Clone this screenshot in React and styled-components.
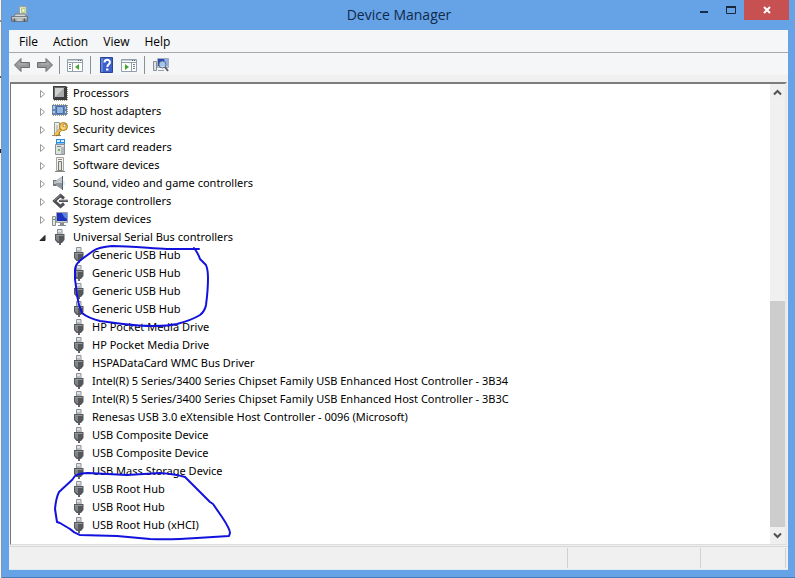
import React from 'react';
import styled, { createGlobalStyle } from 'styled-components';

const GlobalStyle = createGlobalStyle`
  * {
    box-sizing: border-box;
  }
  body {
    margin: 0;
    background: #fff;
    font-family: 'Open Sans', 'Noto Sans', sans-serif;
    font-size: 12px;
    color: #000;
  }
`;

const Desktop = styled.div`
  display: flex;
  min-height: 100vh;
`;

const Behind = styled.div`
  width: 2px;
  background:
    linear-gradient(#889, #889) 0 20px / 1px 2px no-repeat,
    linear-gradient(#556, #556) 0 76px / 1px 2px no-repeat,
    linear-gradient(#224, #224) 0 149px / 1px 4px no-repeat,
    #f4f6f8;
  border-right: 1px solid #8496ac;
`;

const Window = styled.div`
  flex: 1;
  min-width: 0;
  display: flex;
  flex-direction: column;
  padding: 0 7px 7px;
  background: #66a3e6;
  border-bottom: 1px solid #4a7db8;
`;

const TitleBar = styled.header`
  display: grid;
  grid-template-columns: 110px 1fr 110px;
  height: 30px;
  margin-right: -1px;
`;

const AppIcon = styled.div`
  padding: 6px 0 0 2px;
`;

const Title = styled.h1`
  margin: 0;
  padding-top: 4px;
  text-align: center;
  font-size: 14px;
  line-height: 22px;
  font-weight: 400;
  color: #10294a;
`;

const WindowButtons = styled.div`
  display: flex;
  justify-content: flex-end;
  align-items: flex-start;
`;

const WindowButton = styled.button`
  display: flex;
  align-items: center;
  justify-content: center;
  width: ${({ $close }) => ($close ? 45 : 27)}px;
  height: 20px;
  padding: 0;
  border: 0;
  flex: none;
  background: ${({ $close }) => ($close ? '#c75050' : 'transparent')};
`;

const Client = styled.div`
  flex: 1;
  display: flex;
  flex-direction: column;
  background: #f0f0f0;
  border-bottom: 1px solid #dfe9f3;
`;

const MenuBar = styled.nav`
  display: flex;
  gap: 1px;
  height: 23px;
  padding-left: 3px;
  background: #f5f6f7;
  border-bottom: 1px solid #a9a9a9;
`;

const MenuItem = styled.button`
  height: 22px;
  padding: 0 7px;
  border: 0;
  background: none;
  font: inherit;
  color: inherit;
`;

const ToolBar = styled.div`
  display: flex;
  align-items: center;
  height: 22px;
  padding: 2px 0 0 1px;
  background: #f5f6f7;
`;

const ToolButton = styled.button`
  display: flex;
  align-items: center;
  justify-content: center;
  width: 23px;
  height: 20px;
  padding: 0;
  border: 0;
  background: none;
`;

const ToolDivider = styled.div`
  width: 1px;
  height: 18px;
  margin: 0 4px 0 3px;
  background: #8c8f92;
`;

const Panel = styled.div`
  flex: 1;
  display: flex;
  margin: 7px 1px 0;
  background: #fff;
  border: 1px solid #dcdcdc;
  border-top: 2px solid #7c7c7c;
  border-left-color: #777;
  border-right: 2px solid #e9e9e9;
`;

const TreeArea = styled.main`
  position: relative;
  flex: 1;
  min-width: 0;
  overflow: hidden;
  font-family: 'Noto Sans', sans-serif;
  font-size: 11px;
`;

const List = styled.ul`
  margin: 0;
  padding: 0;
  list-style: none;
`;

const Row = styled.li`
  display: flex;
  align-items: center;
  height: 18px;
  padding-left: ${({ $child }) => ($child ? 60 : 27)}px;
  line-height: 18px;
  white-space: nowrap;
`;

const Toggle = styled.button`
  display: flex;
  width: 10px;
  height: 10px;
  margin-right: 4px;
  padding: 0;
  border: 0;
  background: none;
`;

const Label = styled.span`
  padding-left: 5px;
`;

const Ink = styled.svg`
  position: absolute;
  top: 0;
  left: 0;
  pointer-events: none;
`;

const ScrollBar = styled.div`
  display: flex;
  flex-direction: column;
  width: 15px;
  background: #f0f0f0;
`;

const ScrollButton = styled.button`
  display: flex;
  align-items: center;
  justify-content: center;
  height: 17px;
  padding: 0;
  border: 0;
  background: #efefef;
`;

const ScrollTrack = styled.div`
  flex: 1;
  display: flex;
  flex-direction: column;
  justify-content: flex-end;
`;

const ScrollThumb = styled.div`
  height: 53%;
  background: #cdcdcd;
`;

const StatusBar = styled.footer`
  display: grid;
  grid-template-columns: 1fr 133px 85px;
  height: 23px;
  margin-top: 1px;
  padding: 1px 2px 1px 0;
  border-top: 1px solid #d7d7d7;
`;

const StatusCell = styled.div`
  border-right: 1px solid #d0d0d0;
`;

const Icon = ({ children, size = 16 }) => (
  <svg width={size} height={size} viewBox="0 0 16 16" aria-hidden="true">
    {children}
  </svg>
);

const UsbIcon = () => (
  <Icon>
    <path d="M5.500.500h4.500v6H5.500z" fill="#dfe2e6" stroke="#8e9196" />
    <path d="M6 3h4v2H6z" fill="#b9bdc2" />
    <path d="M3 5h9.500v6L10 14H5.500L3 11z" fill="#55575b" />
    <path d="M4 6h3v7L4 10.500z" fill="#818488" />
    <path d="M4 6h7.500v1H4z" fill="#94979b" />
    <path d="M7 14h2v2H7z" fill="#606367" />
  </Icon>
);

const CpuIcon = () => (
  <Icon>
    <path d="M15.500 2v14M2 15.500h14" stroke="#a89a7a" strokeDasharray="1 1" />
    <path d="M1 1h13l1 1v13H2l-1-1z" fill="#3c3c3e" />
    <path d="M2 2h11v1H3v10H2z" fill="#68696b" />
    <path d="M3 3h9v9H3z" fill="#a9aaab" />
    <path d="M3 3h9L3 12z" fill="#cfd0d0" />
  </Icon>
);

const SdIcon = () => (
  <Icon>
    <path d="M1 1.500h14M1 12.500h14" stroke="#a79c70" strokeDasharray="1 1" />
    <path d="M15.500 2v10" stroke="#a79c70" strokeDasharray="1 1" />
    <path d="M0 2h15v10H0z" fill="#6485b3" />
    <path d="M4.500 3.500h7v7h-7z" fill="#8fb4e2" stroke="#4a6c9a" />
    <path d="M1 3h2v3H1zM1 8h2v2H1zM13 4h1v2h-1zM13 8h1v2h-1z" fill="#b3cbe8" />
  </Icon>
);

const KeyIcon = () => (
  <Icon>
    <path d="M2.500 1.500h5v12h-5z" fill="#ebeceb" stroke="#969990" />
    <path d="M4 4h2v7H4z" fill="#c5c8c4" />
    <path d="M0 14h9v1H0z" fill="#8e8e8a" />
    <path d="M9 8l-6 6.500M5 12l2 2" stroke="#8c650c" strokeWidth="3" />
    <path d="M9 8l-6 6M5 12l1.500 1.500" stroke="#f6c650" strokeWidth="2" />
    <circle cx="11.500" cy="5.500" r="4" fill="#f7cb5a" stroke="#a7781d" />
    <circle cx="12.500" cy="4.500" r="1.500" fill="#fff" stroke="#a7781d" />
    <path d="M8.500 6.500h5l-3 2z" fill="#fbe08a" />
  </Icon>
);

const CardIcon = () => (
  <Icon>
    <path d="M4 0h9v6H4z" fill="#2b8ad9" />
    <path d="M5 1h3v2H5zM9 1h3v2H9z" fill="#d7edff" />
    <path d="M5 4h7v1H5z" fill="#84c0ee" />
    <path d="M3.500 5.500h9v10h-9z" fill="#dfe2e5" stroke="#8b9197" />
    <path d="M5 7h4v1H5z" fill="#888" />
    <path d="M9 8h3v7H9z" fill="#b2b6ba" />
    <path d="M6 10h2v2H6z" fill="#66bd4b" />
  </Icon>
);

const SoftwareIcon = () => (
  <Icon>
    <path d="M4.500.500h7v13h-7z" fill="#f2f2f0" stroke="#a5a59e" />
    <path d="M6.500 4.500h3v9h-3z" fill="#e4e5e2" stroke="#777871" />
    <path d="M6 2h4v1H6zM3 14h10v1H3z" fill="#888982" />
  </Icon>
);

const SoundIcon = () => (
  <Icon>
    <path d="M1 5h4v6H1z" fill="#70777d" />
    <path d="M2 6h2v3H2z" fill="#b4bac0" />
    <path d="M4 5.500L11 1v14l-7-4.500z" fill="#8f979e" />
    <path d="M4 6l6-4v6H4z" fill="#c1c7cc" />
    <path d="M10 1h1v14h-1z" fill="#596169" />
    <path d="M12 6v4" stroke="#c4dcec" />
  </Icon>
);

const StorageIcon = () => (
  <Icon>
    <path d="M12 5.500L8.500 2.500 2.500 8l6 5.500 3.500-3" fill="none" stroke="#4d4f52" strokeWidth="3" />
    <path d="M2.500 7.500l6-5.500" stroke="#8b8e91" />
    <path d="M7 8h9" stroke="#53565a" strokeWidth="2" />
    <path d="M8 7h8" stroke="#96999c" />
  </Icon>
);

const SystemIcon = () => (
  <Icon>
    <path d="M.500 5.500h3v9h-3z" fill="#e5e6e4" stroke="#8c918e" />
    <path d="M1 8h2v1H1z" fill="#65a25e" />
    <path d="M4.500 1.500h11v10h-11z" fill="#c6cbd1" stroke="#9ba1a9" />
    <path d="M5 2h10v8H5z" fill="#1a32bd" />
    <path d="M10 2h5v6l-3-2z" fill="#5b82e6" />
    <path d="M8 12h4v2H8zM6 14h8v1H6z" fill="#878c91" />
  </Icon>
);

const DeviceManagerIcon = () => (
  <Icon size={18}>
    <path d="M7.500.500h6v8h-6z" fill="#eef3ea" stroke="#9aa396" />
    <path d="M9 2h3.500v4H9z" fill="#a9c95a" />
    <path d="M10 3h2v2h-2z" fill="#fff" />
    <path d="M2 10l2-3h8l3 3z" fill="#d3d7d9" stroke="#7f878b" />
    <path d="M.500 9.500h14v4H.500z" fill="#9ca2a5" stroke="#666d70" />
    <path d="M1 10h13v1H1z" fill="#dfe3e4" />
    <path d="M3 11v3M12 11v3" stroke="#4e5558" />
    <path d="M5 12h5v1H5z" fill="#e6e8e8" />
  </Icon>
);

const ArrowIcon = ({ flip }) => (
  <svg width="18" height="16" viewBox="0 0 18 16" aria-hidden="true">
    <path
      d="M1.500 8L8 1.500v4h8.500v5H8v4z"
      fill="#97999b"
      stroke="#6a6c6e"
      strokeLinejoin="round"
      transform={flip ? 'translate(18 0) scale(-1 1)' : undefined}
    />
    <path d="M5 7h8" stroke="#b4b6b8" />
  </svg>
);

// console panes; `right` puts the side list on the right with a forward arrow
const PaneIcon = ({ right }) => (
  <svg width="17" height="16" viewBox="0 0 17 16" aria-hidden="true">
    <path d="M.500 2.500h15v12H.500z" fill="#fff" stroke="#93a0ab" />
    <path d="M1 3h14v1H1z" fill="#c3ccd5" />
    <path d="M11 3h1v1h-1zM13 3h1v1h-1z" fill="#53667b" />
    <path d="M1 5.500h14" stroke="#93a0ab" />
    {right ? (
      <>
        <path d="M10.500 6v8" stroke="#93a0ab" />
        <path d="M12 7.500h2M12 9.500h2M12 11.500h2" stroke="#6b8095" />
        <path d="M4 7l4 3-4 3z" fill="#45a52e" />
      </>
    ) : (
      <>
        <path d="M5.500 6v8" stroke="#93a0ab" />
        <path d="M2 7.500h2M2 9.500h2M2 11.500h2" stroke="#6b8095" />
        <path d="M12 7l-4 3 4 3z" fill="#45a52e" />
      </>
    )}
  </svg>
);

const HelpIcon = () => (
  <svg width="14" height="16" viewBox="0 0 14 16" aria-hidden="true">
    <path d="M.500.500h12v15H.500z" fill="#3c5fca" stroke="#2a4499" />
    <path d="M1 1h2v14H1z" fill="#6583dc" />
    <path
      d="M4.500 5.500C4.500 2 10 2 10 5.300c0 2-2.700 2-2.700 4.700"
      fill="none"
      stroke="#fff"
      strokeWidth="2"
    />
    <path d="M6 11.500h2.500v2H6z" fill="#fff" />
  </svg>
);

const ScanIcon = () => (
  <svg width="18" height="17" viewBox="0 0 18 17" aria-hidden="true">
    <path d="M1.500 4.500h3v9h-3z" fill="#dfe2e4" stroke="#868e96" />
    <path d="M5.500 1.500h11v9h-11z" fill="#c3cbd5" stroke="#a5adb8" />
    <path d="M6 2h10v7H6z" fill="#2d47b8" />
    <path d="M12 2h4v7h-2z" fill="#93aeea" />
    <circle cx="10.500" cy="7.500" r="3.500" fill="#c3e1f5" fillOpacity=".8" stroke="#5d7187" />
    <path d="M13 10l3 4" stroke="#5b6269" strokeWidth="2" />
    <path d="M6 13h6v1H6z" fill="#999fa5" />
  </svg>
);

const Chevron = ({ down }) => (
  <svg width="9" height="7" viewBox="0 0 9 7" aria-hidden="true">
    <path
      d={down ? 'M1 1.500L4.500 5 8 1.500' : 'M1 5.500L4.500 2 8 5.500'}
      fill="none"
      stroke="#505050"
      strokeWidth="2"
    />
  </svg>
);

const ToggleMark = ({ open }) => (
  <svg width="10" height="10" viewBox="0 0 10 10" aria-hidden="true">
    {open ? (
      <path d="M7 3.500v5H2z" fill="#333" stroke="#222" strokeLinejoin="round" />
    ) : (
      <path d="M2.500 2.500v7l4-3.500z" fill="#fff" stroke="#9a9a9a" />
    )}
  </svg>
);

const categories = [
  { text: 'Processors', icon: CpuIcon },
  { text: 'SD host adapters', icon: SdIcon },
  { text: 'Security devices', icon: KeyIcon },
  { text: 'Smart card readers', icon: CardIcon },
  { text: 'Software devices', icon: SoftwareIcon },
  { text: 'Sound, video and game controllers', icon: SoundIcon },
  { text: 'Storage controllers', icon: StorageIcon },
  { text: 'System devices', icon: SystemIcon },
  {
    text: 'Universal Serial Bus controllers',
    icon: UsbIcon,
    items: [
      'Generic USB Hub',
      'Generic USB Hub',
      'Generic USB Hub',
      'Generic USB Hub',
      'HP Pocket Media Drive',
      'HP Pocket Media Drive',
      'HSPADataCard WMC Bus Driver',
      'Intel(R) 5 Series/3400 Series Chipset Family USB Enhanced Host Controller - 3B34',
      'Intel(R) 5 Series/3400 Series Chipset Family USB Enhanced Host Controller - 3B3C',
      'Renesas USB 3.0 eXtensible Host Controller - 0096 (Microsoft)',
      'USB Composite Device',
      'USB Composite Device',
      'USB Mass Storage Device',
      'USB Root Hub',
      'USB Root Hub',
      'USB Root Hub (xHCI)',
    ],
  },
];

const Category = ({ item }) => (
  <>
    <Row>
      <Toggle aria-label={item.text} aria-expanded={Boolean(item.items)}>
        <ToggleMark open={Boolean(item.items)} />
      </Toggle>
      <item.icon />
      <Label>{item.text}</Label>
    </Row>
    {item.items && (
      <li>
        <List>
          {item.items.map((text, index) => (
            <Row key={index} $child>
              <UsbIcon />
              <Label>{text}</Label>
            </Row>
          ))}
        </List>
      </li>
    )}
  </>
);

// pen circles round the hub entries
const PenMarks = () => (
  <Ink width="759" height="461" viewBox="11 84 759 461" aria-hidden="true">
    <g fill="none" stroke="#1212dc" strokeWidth="2" strokeLinecap="round" strokeLinejoin="round">
      <path d="M199 249L167 249C148 248 130 246 112 246Q99 247 93 251L82 259Q75 264 75 270L75 279L77 295Q78 304 82 313Q88 318 100 321L123 324Q140 326 153 326Q168 326 177 324Q192 320 200 315Q205 311 206 305Q208 290 208 278Q208 270 206 265L200 259Q198 253 194 248" />
      <path d="M75 476Q80 473 88 473L127 475L160 473Q175 474 185 477L210 502L213 504L222 517Q230 529 230 533L229 536L197 538Q170 540 150 539L117 536L80 535Q74 533 70 529L60 523L57 522L55 509Q56 498 59 492L72 480L75 476" />
    </g>
  </Ink>
);

const App = () => (
  <Desktop>
    <GlobalStyle />
    <Behind />
    <Window>
      <TitleBar>
        <AppIcon>
          <DeviceManagerIcon />
        </AppIcon>
        <Title>Device Manager</Title>
        <WindowButtons>
          <WindowButton aria-label="Minimize">
            <svg width="8" height="8" viewBox="0 0 8 8">
              <path d="M0 5h8v2H0z" fill="#15304f" />
            </svg>
          </WindowButton>
          <WindowButton aria-label="Maximize">
            <svg width="10" height="8" viewBox="0 0 10 8">
              <path d="M.500 1h9v6.500h-9z" fill="none" stroke="#1a2a3c" />
              <path d="M0 0h10v2H0z" fill="#1a2a3c" />
            </svg>
          </WindowButton>
          <WindowButton $close aria-label="Close">
            <svg width="8" height="8" viewBox="0 0 8 8">
              <path d="M1 1l6 6M7 1L1 7" stroke="#fff" strokeWidth="2" />
            </svg>
          </WindowButton>
        </WindowButtons>
      </TitleBar>
      <Client>
        <MenuBar>
          {['File', 'Action', 'View', 'Help'].map((text) => (
            <MenuItem key={text}>{text}</MenuItem>
          ))}
        </MenuBar>
        <ToolBar>
          <ToolButton aria-label="Back">
            <ArrowIcon />
          </ToolButton>
          <ToolButton aria-label="Forward">
            <ArrowIcon flip />
          </ToolButton>
          <ToolDivider />
          <ToolButton aria-label="Show or hide console tree">
            <PaneIcon />
          </ToolButton>
          <ToolDivider />
          <ToolButton aria-label="Help topics">
            <HelpIcon />
          </ToolButton>
          <ToolButton aria-label="Show or hide action pane">
            <PaneIcon right />
          </ToolButton>
          <ToolDivider />
          <ToolButton aria-label="Scan for hardware changes">
            <ScanIcon />
          </ToolButton>
        </ToolBar>
        <Panel>
          <TreeArea>
            <List>
              {categories.map((item) => (
                <Category key={item.text} item={item} />
              ))}
            </List>
            <PenMarks />
          </TreeArea>
          <ScrollBar>
            <ScrollButton aria-label="Scroll up">
              <Chevron />
            </ScrollButton>
            <ScrollTrack>
              <ScrollThumb />
            </ScrollTrack>
            <ScrollButton aria-label="Scroll down">
              <Chevron down />
            </ScrollButton>
          </ScrollBar>
        </Panel>
        <StatusBar>
          <StatusCell />
          <StatusCell />
          <StatusCell />
        </StatusBar>
      </Client>
    </Window>
  </Desktop>
);

export default App;
